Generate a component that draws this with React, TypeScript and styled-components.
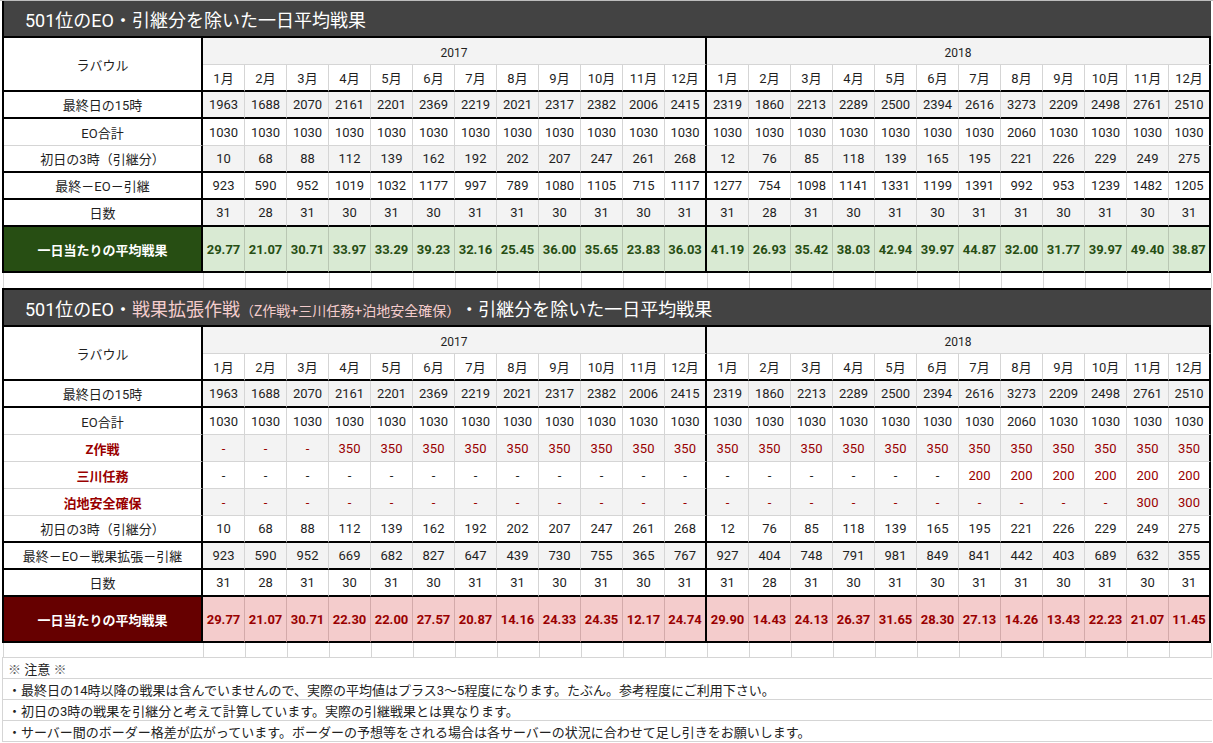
import React, { FC } from "react";
import styled, { createGlobalStyle, css } from "styled-components";

type Edge = "thin" | "thick";
type Tone = "green" | "red";

interface RowData {
  label: string;
  values: string[];
  edge: Edge;
  warn?: boolean;
  darkDash?: boolean;
}

interface AvgData {
  values: string[];
  tone: Tone;
}

const LINE = "#d5d5d5";
const split = (s: string) => s.trim().split(/\s+/);
const MONTHS = Array.from({ length: 12 }, (_, i) => `${i + 1}月`);
const edge = (e: Edge) => (e === "thick" ? "2px solid #000" : `1px solid ${LINE}`);

const TONES = {
  green: { head: "#274e13", cell: "#d9ead3", text: "#274e13", line: "#b9c7b3" },
  red: { head: "#660000", cell: "#f4cccc", text: "#990000", line: "#d3aaaa" },
};

const GlobalStyle = createGlobalStyle`
  html, body {
    margin: 0;
    background: #fff;
  }
  body {
    font-family: Roboto, "Noto Sans CJK JP", sans-serif;
    color: #222;
  }
`;

const Sheet = styled.div`
  width: 1213px;
  padding-left: 2px;
  box-sizing: border-box;
  border-top: 1px solid #bdbdbd;
`;

const Grid = styled.div`
  display: grid;
  grid-template-columns: 199px repeat(24, 42px);
  width: max-content;
  border-left: 2px solid #000;
`;

const Title = styled.div<{ $top?: boolean }>`
  grid-column: 1 / -1;
  display: flex;
  align-items: center;
  box-sizing: border-box;
  height: ${(p) => (p.$top ? 39 : 37)}px;
  padding-left: 21px;
  background: #434343;
  border-top: ${(p) => (p.$top ? "2px solid #000" : "none")};
  border-bottom: 2px solid #000;
  color: #fff;
  font-size: 18px;
  white-space: nowrap;
`;

const Accent = styled.span`
  color: #f4cccc;
`;

const Small = styled.span`
  font-size: 14px;
`;

const Cell = styled.div<{ $bottom?: Edge; $right?: Edge }>`
  box-sizing: border-box;
  height: 27px;
  display: flex;
  align-items: center;
  justify-content: center;
  background: #fff;
  border-bottom: ${(p) => edge(p.$bottom ?? "thin")};
  border-right: ${(p) => edge(p.$right ?? "thin")};
  font-size: 13px;
  color: #1f1f1f;
  white-space: nowrap;
`;

const Corner = styled(Cell)`
  grid-row: span 2;
  height: 54px;
  border-right: 2px solid #000;
  border-bottom: 2px solid #000;
`;

const Year = styled(Cell)`
  grid-column: span 12;
  padding-top: 3px;
  background: #f3f3f3;
  border-right: 2px solid #000;
  font-size: 12px;
`;

const Label = styled(Cell)<{ $warn?: boolean }>`
  border-right: 2px solid #000;
  ${(p) =>
    p.$warn &&
    css`
      color: #990000;
      font-weight: 700;
    `}
`;

const Value = styled(Cell)<{ $shaded?: boolean; $red?: boolean }>`
  background: ${(p) => (p.$shaded ? "#f3f3f3" : "#fff")};
  color: ${(p) => (p.$red ? "#990000" : "#1f1f1f")};
`;

const AvgLabel = styled(Cell)<{ $tone: Tone }>`
  height: 46px;
  background: ${(p) => TONES[p.$tone].head};
  color: #fff;
  font-weight: 700;
  border-right: 2px solid #000;
  border-bottom: 2px solid #000;
`;

const AvgValue = styled(Cell)<{ $tone: Tone }>`
  height: 46px;
  background: ${(p) => TONES[p.$tone].cell};
  color: ${(p) => TONES[p.$tone].text};
  font-weight: 700;
  border-bottom: 2px solid #000;
  border-right: ${(p) => (p.$right === "thick" ? "2px solid #000" : `1px solid ${TONES[p.$tone].line}`)};
`;

const Gap = styled.div<{ $h: number }>`
  height: ${(p) => p.$h}px;
  border-right: 1px solid ${LINE};
`;

const GapRow = styled.div`
  display: grid;
  grid-template-columns: 200px repeat(24, 42px);
  width: max-content;
  border-left: 1px solid ${LINE};
  margin-left: 1px;
`;

const Notes = styled.div`
  width: 1209px;
  border-top: 1px solid ${LINE};
  border-left: 1px solid ${LINE};
`;

const Note = styled.div`
  box-sizing: border-box;
  height: 21px;
  display: flex;
  align-items: center;
  padding-left: 5px;
  border-bottom: 1px solid ${LINE};
  font-size: 13px;
  color: #222;
  white-space: nowrap;
`;

const Mark = styled.span`
  color: #666;
`;

const LAST = split("1963 1688 2070 2161 2201 2369 2219 2021 2317 2382 2006 2415 2319 1860 2213 2289 2500 2394 2616 3273 2209 2498 2761 2510");
const EO = split("1030 1030 1030 1030 1030 1030 1030 1030 1030 1030 1030 1030 1030 1030 1030 1030 1030 1030 1030 2060 1030 1030 1030 1030");
const FIRST = split("10 68 88 112 139 162 192 202 207 247 261 268 12 76 85 118 139 165 195 221 226 229 249 275");
const DAYS = split("31 28 31 30 31 30 31 31 30 31 30 31 31 28 31 30 31 30 31 31 30 31 30 31");

const TABLE_1: RowData[] = [
  { label: "最終日の15時", values: LAST, edge: "thick" },
  { label: "EO合計", values: EO, edge: "thin" },
  { label: "初日の3時（引継分）", values: FIRST, edge: "thick" },
  {
    label: "最終－EO－引継",
    values: split("923 590 952 1019 1032 1177 997 789 1080 1105 715 1117 1277 754 1098 1141 1331 1199 1391 992 953 1239 1482 1205"),
    edge: "thick",
  },
  { label: "日数", values: DAYS, edge: "thick" },
];

const AVG_1: AvgData = {
  tone: "green",
  values: split("29.77 21.07 30.71 33.97 33.29 39.23 32.16 25.45 36.00 35.65 23.83 36.03 41.19 26.93 35.42 38.03 42.94 39.97 44.87 32.00 31.77 39.97 49.40 38.87"),
};

const TABLE_2: RowData[] = [
  { label: "最終日の15時", values: LAST, edge: "thick" },
  { label: "EO合計", values: EO, edge: "thin" },
  {
    label: "Z作戦",
    values: split("- - - 350 350 350 350 350 350 350 350 350 350 350 350 350 350 350 350 350 350 350 350 350"),
    edge: "thin",
    warn: true,
  },
  {
    label: "三川任務",
    values: split("- - - - - - - - - - - - - - - - - - 200 200 200 200 200 200"),
    edge: "thin",
    warn: true,
    darkDash: true,
  },
  {
    label: "泊地安全確保",
    values: split("- - - - - - - - - - - - - - - - - - - - - - 300 300"),
    edge: "thin",
    warn: true,
  },
  { label: "初日の3時（引継分）", values: FIRST, edge: "thick" },
  {
    label: "最終－EO－戦果拡張－引継",
    values: split("923 590 952 669 682 827 647 439 730 755 365 767 927 404 748 791 981 849 841 442 403 689 632 355"),
    edge: "thick",
  },
  { label: "日数", values: DAYS, edge: "thick" },
];

const AVG_2: AvgData = {
  tone: "red",
  values: split("29.77 21.07 30.71 22.30 22.00 27.57 20.87 14.16 24.33 24.35 12.17 24.74 29.90 14.43 24.13 26.37 31.65 28.30 27.13 14.26 13.43 22.23 21.07 11.45"),
};

const yearEdge = (i: number): Edge => (i % 12 === 11 ? "thick" : "thin");

const HeaderRows: FC = () => (
  <>
    <Corner>ラバウル</Corner>
    <Year>2017</Year>
    <Year>2018</Year>
    {[...MONTHS, ...MONTHS].map((m, i) => (
      <Cell key={i} $bottom="thick" $right={yearEdge(i)}>
        {m}
      </Cell>
    ))}
  </>
);

const DataRow: FC<{ row: RowData; shaded: boolean }> = ({ row, shaded }) => (
  <>
    <Label $bottom={row.edge} $warn={row.warn}>
      {row.label}
    </Label>
    {row.values.map((v, i) => (
      <Value
        key={i}
        $bottom={row.edge}
        $right={yearEdge(i)}
        $shaded={shaded}
        $red={row.warn && !(row.darkDash && v === "-")}
      >
        {v}
      </Value>
    ))}
  </>
);

const AvgRow: FC<{ avg: AvgData }> = ({ avg }) => (
  <>
    <AvgLabel $tone={avg.tone}>一日当たりの平均戦果</AvgLabel>
    {avg.values.map((v, i) => (
      <AvgValue key={i} $tone={avg.tone} $right={yearEdge(i)}>
        {v}
      </AvgValue>
    ))}
  </>
);

const Spacer: FC<{ height: number }> = ({ height }) => (
  <GapRow>
    {Array.from({ length: 25 }, (_, i) => (
      <Gap key={i} $h={height} />
    ))}
  </GapRow>
);

const Table: FC<{ title: React.ReactNode; rows: RowData[]; avg: AvgData; top?: boolean }> = ({
  title,
  rows,
  avg,
  top,
}) => (
  <Grid>
    <Title $top={top}>{title}</Title>
    <HeaderRows />
    {rows.map((row, i) => (
      <DataRow key={row.label} row={row} shaded={i % 2 === 0} />
    ))}
    <AvgRow avg={avg} />
  </Grid>
);

const App: FC = () => (
  <>
    <GlobalStyle />
    <Sheet>
      <Table title="501位のEO・引継分を除いた一日平均戦果" rows={TABLE_1} avg={AVG_1} />
      <Spacer height={15} />
      <Table
        top
        title={
          <>
            501位のEO・
            <Accent>
              戦果拡張作戦<Small>（Z作戦+三川任務+泊地安全確保）</Small>
            </Accent>
            ・引継分を除いた一日平均戦果
          </>
        }
        rows={TABLE_2}
        avg={AVG_2}
      />
      <Spacer height={14} />
      <Notes>
        <Note>
          <Mark>※</Mark>&nbsp;注意&nbsp;<Mark>※</Mark>
        </Note>
        <Note>・最終日の14時以降の戦果は含んでいませんので、実際の平均値はプラス3～5程度になります。たぶん。参考程度にご利用下さい。</Note>
        <Note>・初日の3時の戦果を引継分と考えて計算しています。実際の引継戦果とは異なります。</Note>
        <Note>・サーバー間のボーダー格差が広がっています。ボーダーの予想等をされる場合は各サーバーの状況に合わせて足し引きをお願いします。</Note>
      </Notes>
    </Sheet>
  </>
);

export default App;
